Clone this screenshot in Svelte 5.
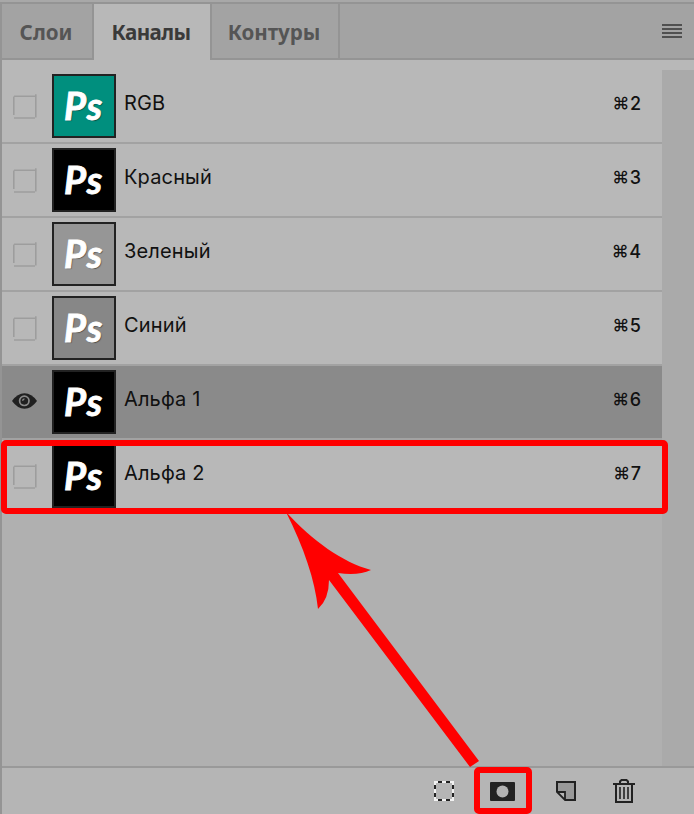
<!-- App.svelte — channels panel -->
<script lang="ts">
  type Channel = { name: string; key: string; fill: string };

  const tabs = [
    { label: 'Слои',    width: 92,  tracking: 0 },
    { label: 'Каналы',  width: 118, tracking: -0.6 },
    { label: 'Контуры', width: 128, tracking: -0.1 },
  ];

  const channels: Channel[] = [
    { name: 'RGB',     key: '2', fill: '#008f7e' },
    { name: 'Красный', key: '3', fill: '#000000' },
    { name: 'Зеленый', key: '4', fill: '#969696' },
    { name: 'Синий',   key: '5', fill: '#878787' },
    { name: 'Альфа 1', key: '6', fill: '#000000' },
    { name: 'Альфа 2', key: '7', fill: '#000000' },
  ];

  let activeTab = $state('Каналы');
  let selected  = $state('Альфа 1');
</script>

<div class="panel">
  <header class="tabs">
    {#each tabs as tab}
      <button class="tab" class:tab--active={tab.label === activeTab}
        style:width="{tab.width}px" style:letter-spacing="{tab.tracking}px"
        onclick={() => (activeTab = tab.label)}>{tab.label}</button>
    {/each}
    <div class="menu"><i></i><i></i><i></i><i></i></div>
  </header>

  <div class="body">
    <div class="list">
      {#each channels as ch}
        <button class="row" class:row--selected={ch.name === selected} onclick={() => (selected = ch.name)}>
          <span class="toggle">
            {#if ch.name === selected}
              <svg width="26" height="16" viewBox="0 0 26 16">
                <path d="M0 8Q5.500 .3 12.500 .3T25 8Q19.500 15.700 12.500 15.700T0 8Z" fill="#202020" />
                <circle cx="12.300" cy="7.800" r="4.700" fill="#202020" stroke="#8a8a8a" stroke-width="1.700" />
                <path d="M12.500 5.200A2.700 2.700 0 0 0 9.900 7.800H12.500Z" fill="#8a8a8a" />
                <circle cx="12.900" cy="8" r="1.500" fill="#202020" />
              </svg>
            {:else}
              <svg width="24" height="26" viewBox="0 0 24 26" fill="none" stroke="#9d9d9d" stroke-width="1.600">
                <path d="M1 2.200H23M.8 2.500V21M22.800 .3V23.500M1 24H22" />
              </svg>
            {/if}
          </span>
          <span class="thumb" style:background={ch.fill}><b>Ps</b></span>
          <span class="name">{ch.name}</span>
          <span class="key"><span class="cmd">⌘</span>{ch.key}</span>
        </button>
      {/each}
    </div>
    <div class="scroll"></div>
  </div>

  <footer class="footer">
    <svg width="20" height="20" viewBox="0 0 20 20" fill="none" stroke-width="2">
      <rect x="1" y="1" width="18" height="18" stroke="#f2f2f2" />
      <path d="M4 1H8M12 1H16M4 19H8M12 19H16M1 4V8M1 12V16M19 4V8M19 12V16" stroke="#222" />
    </svg>
    <svg class="mask" width="25" height="19" viewBox="0 0 25 19">
      <rect width="25" height="19" rx="1" fill="#222" />
      <circle cx="12.500" cy="9.500" r="6" fill="#b2b2b2" />
    </svg>
    <svg width="20" height="20" viewBox="0 0 20 20" stroke="#222" stroke-width="2">
      <path d="M1 1H19V19H9L1 11Z" fill="#999" stroke="none" />
      <path d="M1 11H9V19Z" fill="#b5b5b5" stroke-width="1.800" />
      <path d="M1 11V1H19V19H9" fill="none" />
    </svg>
    <svg width="22" height="24" viewBox="0 0 22 24" fill="none" stroke="#222" stroke-width="2">
      <path d="M0 5H22M3 5V23H19V5M7 4.500V2.500L8.500 1H13.500L15 2.500V4.500" />
      <path d="M7 8V20M11 8V20M15 8V20" stroke-width="1.600" />
    </svg>
  </footer>

  <svg class="notes" width="694" height="814" viewBox="0 0 694 814" fill="none">
    <rect x="4" y="443" width="661" height="68" rx="2" stroke="red" stroke-width="6" />
    <rect x="477" y="770" width="52" height="41" rx="2" stroke="red" stroke-width="6" />
    <path d="M286 512C313 541 342 562 371 570Q358 576 338 573L479 761L470 767L329 580Q329 599 318 609C315 580 304 548 286 512Z" fill="red" />
  </svg>
</div>

<style>
  :global(body) { background: #b0b0b0; }

  .panel {
    position: relative; display: flex; flex-direction: column;
    width: 694px; height: 814px; box-sizing: border-box;
    border-top: 2px solid #a8a8a8;
    background: linear-gradient(to right, #949494 2px, #b8b8b8 2px);
    padding-left: 2px; font-family: Inter, 'Liberation Sans', sans-serif;
  }
  button { border: 0; margin: 0; padding: 0; background: none; cursor: pointer; font: inherit; }

  .tabs {
    display: flex; height: 58px; box-sizing: border-box; flex: none;
    border-top: 2px solid #949494; background: #a3a3a3;
  }
  .tab {
    box-sizing: border-box; white-space: nowrap; padding: 0 2px 1px 0;
    border-right: 2px solid #949494; box-shadow: inset 0 -2px #949494;
    color: #555; font: bold 20.6px 'Noto Sans', 'Open Sans', sans-serif;
  }
  .tab--active { background: #b8b8b8; color: #3a3a3a; box-shadow: none; }
  .menu {
    flex: 1; display: flex; flex-direction: column; align-items: flex-end; gap: 2px;
    padding: 20px 12px 0 0; border-bottom: 2px solid #949494;
  }
  .menu i { width: 20px; height: 2px; background: #505050; }

  .body { display: flex; flex: 1; padding-top: 10px; }
  .list { width: 660px; background: #b0b0b0; }
  .row {
    display: flex; width: 100%; height: 74px; box-sizing: border-box; padding-top: 4px;
    border-bottom: 2px solid #a2a2a2; background: #b8b8b8; color: #111; text-align: left;
  }
  .row--selected { background: #8a8a8a; }
  .row:last-child { border-bottom: 0; }
  .toggle { display: flex; width: 50px; height: 64px; padding: 20px 0 0 11px; box-sizing: border-box; }
  .row--selected .toggle { padding: 23px 0 0 10px; }
  .thumb {
    width: 64px; height: 64px; box-sizing: border-box; border: 2px solid #222;
    padding-left: 10px; color: #fff; line-height: 59px;
    font-family: Lato, sans-serif; font-size: 38px; font-style: italic; letter-spacing: 1.2px;
    -webkit-text-stroke: 0.9px #fff; text-shadow: 1px 1px 1px rgba(0, 0, 0, 0.5);
  }
  .name { flex: 1; padding: 17px 0 0 8px; font-size: 20px; line-height: 24px; letter-spacing: 0.15px; }
  .key { display: flex; align-items: center; height: 24px; margin: 17px 21px 0 0; font-size: 18px; font-weight: 500; }
  .cmd { font-size: 17px; margin-right: 0.5px; }
  .scroll { flex: 1; background: #aaa; }

  .footer {
    display: flex; align-items: center; justify-content: flex-end; gap: 37px;
    height: 48px; box-sizing: border-box; flex: none; padding-right: 59px;
    border-top: 2px solid #999; background: #b5b5b5;
  }
  .mask { margin: 0 4px 0 -1px; }
  .notes { position: absolute; top: -2px; left: 0; pointer-events: none; }
</style>
